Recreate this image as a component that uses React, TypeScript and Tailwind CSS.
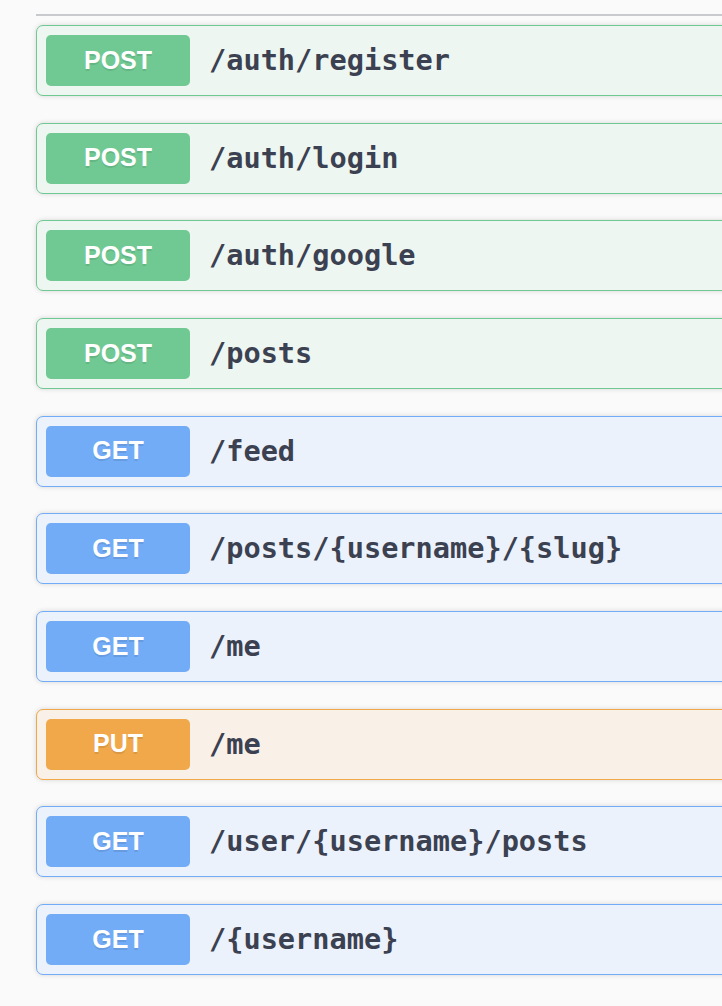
import React from "react";

type Op = { method: "POST" | "GET" | "PUT"; path: string };

const ops: Op[] = [
  { method: "POST", path: "/auth/register" },
  { method: "POST", path: "/auth/login" },
  { method: "POST", path: "/auth/google" },
  { method: "POST", path: "/posts" },
  { method: "GET", path: "/feed" },
  { method: "GET", path: "/posts/{username}/{slug}" },
  { method: "GET", path: "/me" },
  { method: "PUT", path: "/me" },
  { method: "GET", path: "/user/{username}/posts" },
  { method: "GET", path: "/{username}" },
];

const styles = {
  POST: { card: "bg-[#edf6f0] border-[#70c993]", badge: "bg-[#70c993]" },
  GET: { card: "bg-[#ebf2fb] border-[#72acf7]", badge: "bg-[#72acf7]" },
  PUT: { card: "bg-[#f9f0e7] border-[#f0a84a]", badge: "bg-[#f0a84a]" },
};

export default function App() {
  return (
    <div className="w-[722px] h-[1006px] overflow-hidden bg-[#fafafa]">
      <div className="w-[900px] pl-[36px] pt-[14px]">
        <div className="h-[1.5px] bg-[#c9cacd] mb-[9.5px]" />
        {ops.map((op, i) => (
          <div
            key={i}
            className={`flex items-center border rounded-[7px] p-[9px] mb-[26.67px] shadow-[0_0_5px_rgba(0,0,0,0.15)] ${styles[op.method].card}`}
          >
            <div
              className={`w-[144px] h-[51px] flex items-center justify-center rounded-[5px] text-white font-bold text-[25px] [text-shadow:0_1.8px_0_rgba(0,0,0,0.1)] ${styles[op.method].badge}`}
              style={{ fontFamily: '"Liberation Sans", Arial, sans-serif' }}
            >
              {op.method}
            </div>
            <div
              className="pl-[19px] text-[#3b4151] font-bold text-[28.6px]"
              style={{ fontFamily: '"DejaVu Sans Mono", monospace' }}
            >
              {op.path}
            </div>
          </div>
        ))}
      </div>
    </div>
  );
}
